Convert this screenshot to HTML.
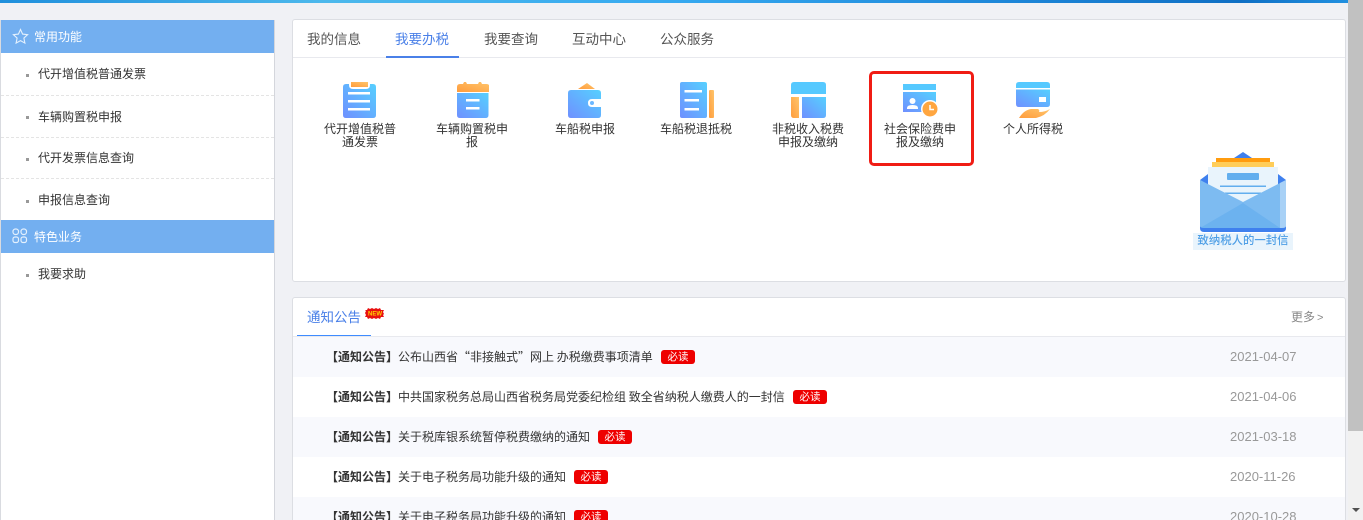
<!DOCTYPE html>
<html lang="zh-CN"><head><meta charset="utf-8"><title>我要办税</title>
<style>
html,body{margin:0;padding:0;width:1363px;height:520px;overflow:hidden;background:#f0f1f5}
#wrap{position:absolute;left:0;top:0;width:1363px;height:520px;overflow:hidden;background:#f0f1f5;font-family:"Liberation Sans","Noto Sans CJK SC",sans-serif;font-size:12px;color:#333}
#wrap div,#wrap svg{position:absolute;white-space:nowrap}
#top{left:0;top:0;width:1348px;height:3px;background:linear-gradient(90deg,#1f8fdc 0,#4cb8ec 24%,#36a9f0 50%,#1d86d8 75%,#0f6fc4 92%,#2190e0 100%)}
#sb{left:1348px;top:0;width:15px;height:520px;background:#f1f1f1}
#th{left:0;top:0;width:15px;height:431px;background:#c1c1c1}
#side{left:0;top:20px;width:273px;height:500px;background:#fff;border-right:1px solid #d4d6dc;border-left:1px solid #d9dbe0}
.sh{left:0;width:273px;height:33px;background:#73aff0}
.sh b{position:absolute;left:33px;top:9px;font-weight:400;color:#fff;line-height:16px}
.si{left:37px;line-height:16px;color:#333}
.dot{left:25px;width:3px;height:3px;background:#999}
.ds{left:0;width:273px;border-top:1px dashed #e4e4e4}
.panel{left:292px;width:1052px;background:#fff;border:1px solid #dcdee3;border-radius:3px}
.tab{top:12px;font-size:13.5px;line-height:16px;color:#555}
#wrap .lab{width:80px;text-align:center;line-height:13px;color:#333;white-space:normal}
.row{left:0;width:1052px;height:40px}
.row.t{background:#f8f9fd}
.r{left:33px;top:12px;line-height:16px;color:#333;font-family:"Noto Sans CJK SC",sans-serif}
.r b{font-weight:700;color:#333}
.d{left:937px;top:12px;line-height:16px;color:#999;font-size:13px}
.bd{top:13px;width:34px;height:14px;background:#ee0000;border-radius:3px;color:#fff;font-size:10.5px;line-height:15px;text-align:center}
</style></head><body>
<div id="wrap">
<svg width="0" height="0" style="left:0;top:0"><defs>
<linearGradient id="g" x1="1" y1="0" x2="0" y2="1"><stop offset="0" stop-color="#56d0ff"/><stop offset="1" stop-color="#6f90ff"/></linearGradient>
<linearGradient id="o" x1="1" y1="0" x2="0" y2="1"><stop offset="0" stop-color="#ffc56b"/><stop offset="1" stop-color="#ff9c3c"/></linearGradient>
</defs></svg>
<div id="top"></div>
<div id="sb"><div id="th"></div><div style="left:4px;top:508px;width:0;height:0;border-left:4px solid transparent;border-right:4px solid transparent;border-top:4px solid #505050"></div></div>

<div id="side">
<div class="sh" style="top:0"><svg style="left:11px;top:8px" width="17" height="17" viewBox="0 0 17 17"><path d="M8.500 1.500l2.100 4.600 5 .6-3.700 3.400 1 5-4.400-2.500-4.400 2.500 1-5L1.400 6.700l5-.6z" fill="none" stroke="#e3f0fd" stroke-width="1.100"/></svg><b>常用功能</b></div>
<div class="dot" style="top:54px"></div><div class="si" style="top:46px">代开增值税普通发票</div><div class="ds" style="top:75px"></div>
<div class="dot" style="top:96px"></div><div class="si" style="top:89px">车辆购置税申报</div><div class="ds" style="top:117px"></div>
<div class="dot" style="top:138px"></div><div class="si" style="top:130px">代开发票信息查询</div><div class="ds" style="top:158px"></div>
<div class="dot" style="top:180px"></div><div class="si" style="top:172px">申报信息查询</div>
<div class="sh" style="top:200px"><svg style="left:11px;top:8px" width="16" height="16" viewBox="0 0 16 16" fill="none" stroke="#e3f0fd" stroke-width="1.200"><rect x="1" y="1" width="5.500" height="5.500" rx="2.500"/><rect x="9" y="1" width="5.500" height="5.500" rx="2.500"/><rect x="1" y="9" width="5.500" height="5.500" rx="2"/><rect x="9" y="9" width="5.500" height="5.500" rx="2"/></svg><b>特色业务</b></div>
<div class="dot" style="top:254px"></div><div class="si" style="top:246px">我要求助</div>
</div>

<div class="panel" style="top:19px;height:261px">
<div class="tab" style="left:14px">我的信息</div>
<div class="tab" style="left:102px;color:#4a80e8">我要办税</div>
<div class="tab" style="left:191px">我要查询</div>
<div class="tab" style="left:279px">互动中心</div>
<div class="tab" style="left:367px">公众服务</div>
<div style="left:0;top:37px;width:1052px;height:1px;background:#e8e9ee"></div>
<div style="left:93px;top:36px;width:73px;height:2px;background:#4a80e8"></div>
</div>

<!-- icons: each svg origin noted by left/top -->
<svg style="left:343px;top:82px" width="33" height="36" viewBox="0 0 33 36"><path d="M3 2h3v1q0 4 4 4h13q4 0 4-4V2h3q3 0 3 3v28q0 3-3 3H3q-3 0-3-3V5q0-3 3-3z" fill="url(#g)"/><rect x="8" y="0" width="17" height="5" fill="url(#o)"/><g fill="#fff"><rect x="5" y="10" width="22" height="2.500"/><rect x="5" y="18" width="22" height="2.500"/><rect x="5" y="26" width="22" height="2.500"/></g></svg>
<svg style="left:457px;top:82px" width="32" height="36" viewBox="0 0 32 36"><path d="M0 11h31.500v22q0 3-3 3H3q-3 0-3-3z" fill="url(#g)"/><path d="M3 2h3l1-2h2l1 2h11l1-2h2l1 2h4.500q3 0 3 3v5H0V5q0-3 3-3z" fill="url(#o)"/><g fill="#fff"><rect x="9" y="17" width="13.500" height="2.500"/><rect x="9" y="25" width="13.500" height="2.500"/></g></svg>
<svg style="left:568px;top:83px" width="34" height="35" viewBox="0 0 34 35"><path d="M10 6l9-6 8 6z" fill="url(#o)"/><path d="M3 7h27q3 0 3 3v6H24q-4 0-4 4t4 4h9v8q0 3-3 3H3q-3 0-3-3V10q0-3 3-3z" fill="url(#g)"/><circle cx="24" cy="20" r="2" fill="#6db8ff"/></svg>
<svg style="left:680px;top:82px" width="35" height="36" viewBox="0 0 35 36"><rect x="0" y="0" width="27" height="36" rx="2" fill="url(#g)"/><rect x="29" y="8" width="5" height="28" rx="1" fill="url(#o)"/><g fill="#fff"><rect x="4.500" y="8" width="17.500" height="2.500"/><rect x="4.500" y="17" width="14.500" height="2.500"/><rect x="4.500" y="26" width="14.500" height="2.500"/></g></svg>
<svg style="left:791px;top:82px" width="36" height="36" viewBox="0 0 36 36"><path d="M3 0h29q3 0 3 3v9H0V3q0-3 3-3z" fill="#56c9ff"/><path d="M11 15h24v18q0 3-3 3H11z" fill="url(#g)"/><path d="M0 15h8v21H3q-3 0-3-3z" fill="url(#o)"/></svg>
<svg style="left:903px;top:83px" width="37" height="36" viewBox="0 0 37 36"><rect x="0" y="1" width="33" height="6" fill="#56c9ff"/><rect x="0" y="9" width="33" height="20" fill="url(#g)"/><circle cx="9.500" cy="18" r="3" fill="#fff"/><path d="M4 26v-1q0-3 5.500-3t5.500 3v1z" fill="#fff"/><circle cx="27" cy="26" r="9" fill="#fff"/><circle cx="27" cy="26" r="7.500" fill="#ffa640"/><path d="M27 22v4.500h4" fill="none" stroke="#fff" stroke-width="1.500"/></svg>
<svg style="left:1016px;top:82px" width="35" height="36" viewBox="0 0 35 36"><path d="M3 0h28q3 0 3 3v3H0V3q0-3 3-3z" fill="#56c9ff"/><path d="M0 7.500h34V22q0 3-3 3H3q-3 0-3-3z" fill="url(#g)"/><rect x="23" y="15" width="7" height="5" fill="#fff"/><path d="M3 36q5-8 12-9h7q2 1 1 3 6 0 11-3-5 7-14 9z" fill="url(#o)"/></svg>

<div class="lab" style="left:320px;top:123px">代开增值税普通发票</div>
<div class="lab" style="left:432px;top:123px">车辆购置税申报</div>
<div class="lab" style="left:545px;top:123px">车船税申报</div>
<div class="lab" style="left:656px;top:123px">车船税退抵税</div>
<div class="lab" style="left:768px;top:123px">非税收入税费申报及缴纳</div>
<div class="lab" style="left:880px;top:123px">社会保险费申报及缴纳</div>
<div class="lab" style="left:993px;top:123px">个人所得税</div>
<div style="left:869px;top:71px;width:99px;height:89px;border:3px solid #f01c14;border-radius:5px"></div>

<!-- letter -->
<svg style="left:1199px;top:152px" width="89" height="82" viewBox="0 0 89 82">
<path d="M44 0l9 6H35z" fill="#3f80ee"/>
<path d="M1 28l8-6v11zM87 28l-8-6v11z" fill="#3f80ee"/>
<rect x="17" y="6" width="54" height="4.500" fill="#ff9c0f"/>
<rect x="13" y="10" width="62" height="5" fill="#ffcd59"/>
<rect x="9" y="15" width="70" height="36" fill="#e9f4fc"/>
<rect x="28" y="21" width="32" height="7" rx="1" fill="#62aeee"/>
<rect x="21" y="33.500" width="46" height="1.500" fill="#62aeee"/>
<rect x="26" y="40.500" width="36" height="1.500" fill="#62aeee"/>
<path d="M1 28L44 50 87 28v47q0 4-4 4H5q-4 0-4-4z" fill="#7dbbf1"/>
<path d="M1 76L44 51l37 25z" fill="#6cb2ef"/>
<path d="M81 31l6-3v47q0 2-2 3l-4-2z" fill="#a8d1f6"/>
<path d="M1 74q0 2 4 2h78q4 0 4-2v2q0 4-4 4H5q-4 0-4-4z" fill="#3f80ee"/>
</svg>
<div style="left:1193px;top:233px;width:100px;height:17px;background:#e9f4fc;color:#4f9fe6;text-align:center;line-height:17px;font-size:11.4px;font-weight:500">致纳税人的一封信</div>

<div class="panel" style="top:297px;height:230px;overflow:hidden">
<div style="left:14px;top:12px;font-size:13.5px;line-height:16px;color:#4a80e8">通知公告</div>
<svg style="left:72px;top:10px" width="20" height="11" viewBox="0 0 20 11"><path d="M0 2l2 0 1-2 2 1 2-1 2 1 2-1 2 1 2-1 1 2 3 0-1 2 1 2-1 1 1 2-3 0-1 2-2-1-2 1-2-1-2 1-2-1-2 1-1-2-2 0 1-2-1-2 1-2z" fill="#e81010"/><text x="10" y="7.500" text-anchor="middle" font-size="6" font-weight="700" fill="#ffd000" font-family="Liberation Sans">NEW</text></svg>
<div style="left:0;top:38px;width:1052px;height:1px;background:#e8e9ee"></div>
<div style="left:4px;top:37px;width:74px;height:1px;background:#3f8cff"></div>
<div style="left:998px;top:11px;line-height:16px;color:#888">更多<span style="font-size:11px;margin-left:2px">&gt;</span></div>
<div class="row t" style="top:39px"><div class="r"><b>【通知公告】</b>公布山西省“非接触式”网上 办税缴费事项清单</div><div class="bd" style="left:368px">必读</div><div class="d">2021-04-07</div></div>
<div class="row" style="top:79px"><div class="r"><b>【通知公告】</b>中共国家税务总局山西省税务局党委纪检组 致全省纳税人缴费人的一封信</div><div class="bd" style="left:500px">必读</div><div class="d">2021-04-06</div></div>
<div class="row t" style="top:119px"><div class="r"><b>【通知公告】</b>关于税库银系统暂停税费缴纳的通知</div><div class="bd" style="left:305px">必读</div><div class="d">2021-03-18</div></div>
<div class="row" style="top:159px"><div class="r"><b>【通知公告】</b>关于电子税务局功能升级的通知</div><div class="bd" style="left:281px">必读</div><div class="d">2020-11-26</div></div>
<div class="row t" style="top:199px"><div class="r"><b>【通知公告】</b>关于电子税务局功能升级的通知</div><div class="bd" style="left:281px">必读</div><div class="d">2020-10-28</div></div>
</div>
</div>
</body></html>
